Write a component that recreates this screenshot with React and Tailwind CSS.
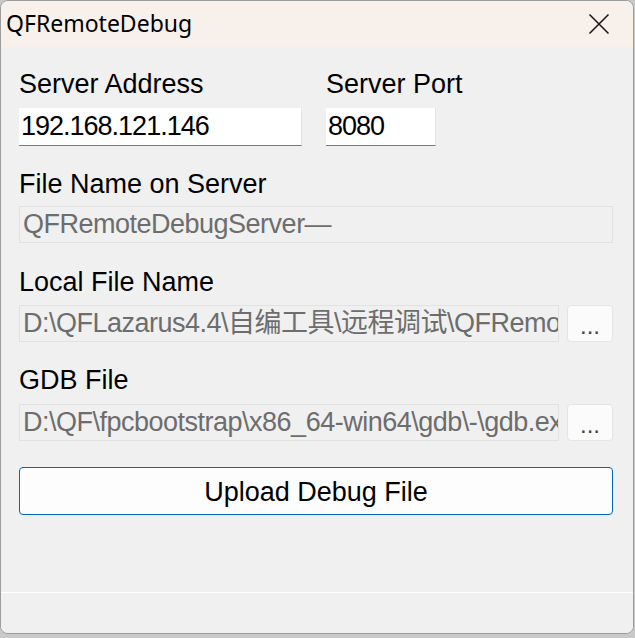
const ui = { fontFamily: '"Liberation Sans", "Noto Sans CJK SC", Arial, sans-serif' };

function CloseIcon() {
  return (
    <svg width="22" height="22" viewBox="0 0 22 22" fill="none" stroke="#1a1a1a" strokeWidth="1.6">
      <path d="M1.5 1.5 L20.5 20.5 M20.5 1.5 L1.5 20.5" />
    </svg>
  );
}

function Label({ children, className = "" }) {
  return <div className={"h-[31px] pt-[2px] text-[27px] leading-[31px] text-black whitespace-nowrap " + className}>{children}</div>;
}

function EditBox({ value, className = "" }) {
  return (
    <div className={"h-[38px] overflow-hidden whitespace-nowrap bg-white border-b border-r border-b-[#7a7a7a] border-r-[#e4e4e4] pl-[2px] pt-[3px] text-[27px] leading-[31px] tracking-[-1px] text-black " + className}>
      {value}
    </div>
  );
}

function ReadOnlyBox({ value, className = "" }) {
  return (
    <div className={"h-[37px] overflow-hidden whitespace-nowrap border border-[#e2e2e2] bg-[#f0f0f0] pl-[3px] pt-[2px] text-[27px] leading-[31px] tracking-[-0.5px] text-[#6d6d6d] " + className}>
      {value}
    </div>
  );
}

function BrowseButton() {
  return (
    <button className="h-[37px] w-[46px] shrink-0 rounded-[4px] border border-[#e5e5e5] bg-[#fbfbfb] px-0 pt-[4px] text-[24px] leading-[28px] text-[#444]">
      ...
    </button>
  );
}

export default function App() {
  return (
    <div className="h-[638px] w-[635px] overflow-hidden bg-[#c9c9c9]" style={ui}>
      <div className="flex h-[634px] w-[634px] flex-col overflow-hidden rounded-[8px] border border-[#9c9c9c] bg-[#f0f0f0]">
        {/* title bar */}
        <div className="flex h-[46px] shrink-0 items-center justify-between bg-[#f8f1eb] pl-[5px] pr-[23px]">
          <div className="pb-[1px] text-[23px] text-black" style={{ fontFamily: '"Noto Sans", "Liberation Sans", sans-serif' }}>
            QFRemoteDebug
          </div>
          <CloseIcon />
        </div>

        {/* form */}
        <div className="flex-1 px-[18px] pt-[20px]">
          <div className="flex gap-[24px]">
            <div className="w-[283px]">
              <Label>Server Address</Label>
              <EditBox value="192.168.121.146" className="mt-[10px]" />
            </div>
            <div className="w-[110px]">
              <Label>Server Port</Label>
              <EditBox value="8080" className="mt-[10px]" />
            </div>
          </div>

          <Label className="mt-[21px]">File Name on Server</Label>
          <ReadOnlyBox value="QFRemoteDebugServer—" className="mt-[8px] w-[594px]" />

          <Label className="mt-[22px]">Local File Name</Label>
          <div className="mt-[9px] flex gap-[8px]">
            <ReadOnlyBox value="D:\QFLazarus4.4\自编工具\远程调试\QFRemoteDebugServer" className="w-[540px]" />
            <BrowseButton />
          </div>

          <Label className="mt-[21px]">GDB File</Label>
          <div className="mt-[10px] flex gap-[8px]">
            <ReadOnlyBox value="D:\QF\fpcbootstrap\x86_64-win64\gdb\-\gdb.exe" className="w-[540px]" />
            <BrowseButton />
          </div>

          <button className="mt-[26px] flex h-[48px] w-[594px] items-center justify-center rounded-[4px] border border-[#0067c0] bg-[#fdfdfd] pt-[3px] text-[27px] leading-[31px] text-black">
            Upload Debug File
          </button>
        </div>

        {/* status bar */}
        <div className="h-[41px] shrink-0 border-t border-white bg-[#f0f0f0]" />
      </div>
    </div>
  );
}
